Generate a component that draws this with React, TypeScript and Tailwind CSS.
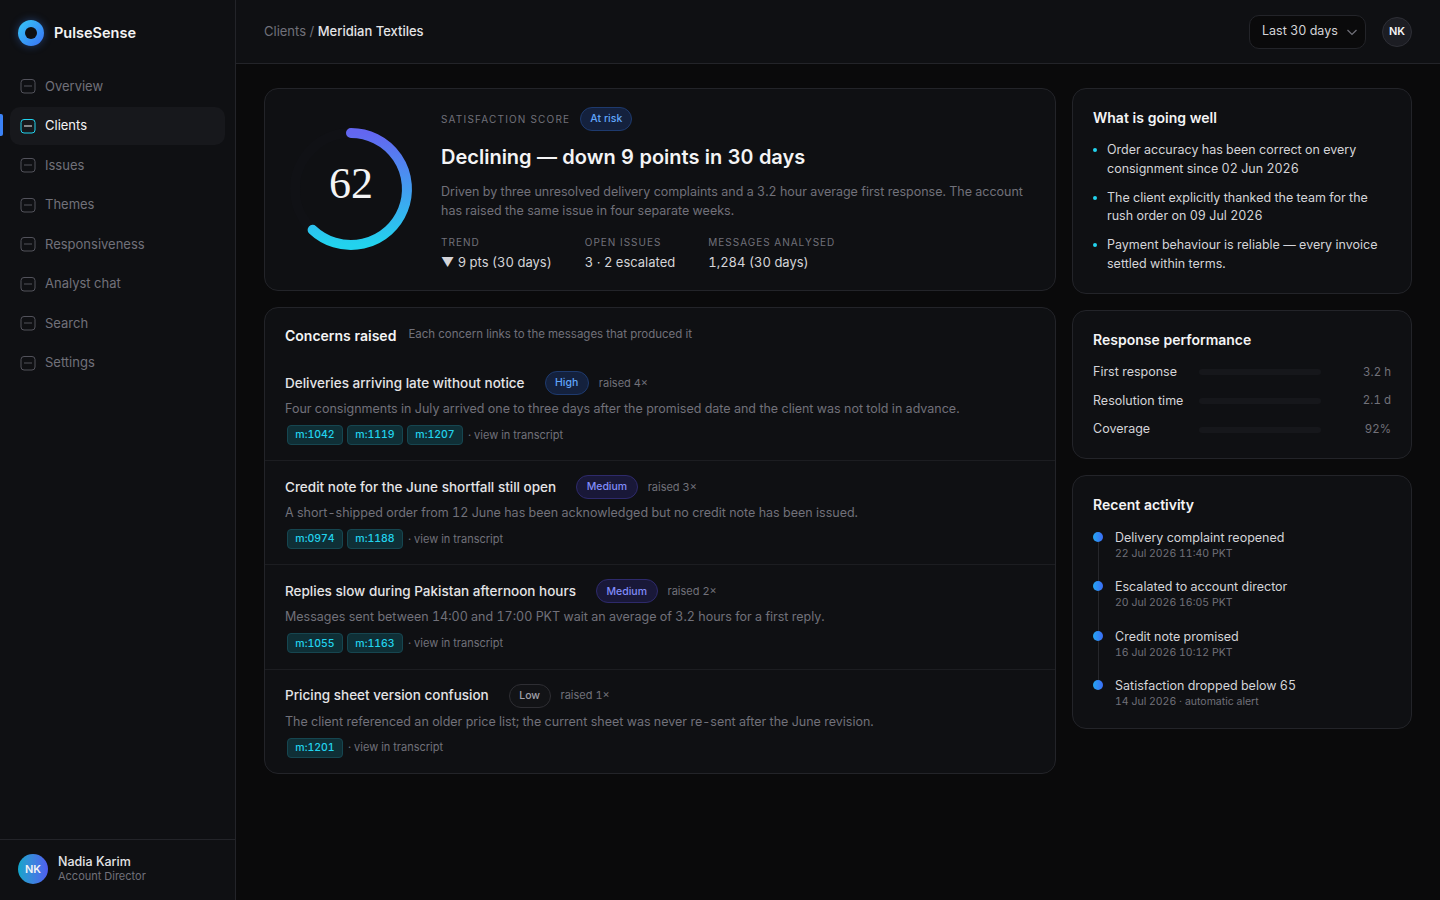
import React from "react";

const nav = ["Overview", "Clients", "Issues", "Themes", "Responsiveness", "Analyst chat", "Search", "Settings"];

function NavIcon({ active }: { active: boolean }) {
  return (
    <svg width="16" height="16" viewBox="0 0 16 16" fill="none" className="shrink-0" stroke={active ? "#22d3ee" : "#52525b"} strokeWidth="1">
      <rect x="1" y="1.5" width="14" height="13.5" rx="3" />
      <path d="M4 8h8" stroke={active ? "#f4f4f5" : "#52525b"} />
    </svg>
  );
}

function Stat({ label, value }: { label: string; value: string }) {
  return (
    <div>
      <div className="text-[10px] leading-[14px] tracking-[0.1em] text-[#71717a]">{label}</div>
      <div className="mt-[3px] text-[13px] leading-[20px] text-[#d4d4d8]">{value}</div>
    </div>
  );
}

const concerns = [
  { t: "Deliveries arriving late without notice", s: "High", c: "border-[#1e3a6e] bg-[#14213d] text-[#60a5fa]", r: "raised 4×", d: "Four consignments in July arrived one to three days after the promised date and the client was not told in advance.", m: ["m:1042", "m:1119", "m:1207"] },
  { t: "Credit note for the June shortfall still open", s: "Medium", c: "border-[#2e2a6b] bg-[#191838] text-[#818cf8]", r: "raised 3×", d: "A short-shipped order from 12 June has been acknowledged but no credit note has been issued.", m: ["m:0974", "m:1188"] },
  { t: "Replies slow during Pakistan afternoon hours", s: "Medium", c: "border-[#2e2a6b] bg-[#191838] text-[#818cf8]", r: "raised 2×", d: "Messages sent between 14:00 and 17:00 PKT wait an average of 3.2 hours for a first reply.", m: ["m:1055", "m:1163"] },
  { t: "Pricing sheet version confusion", s: "Low", c: "border-[#2e2e33] bg-[#121316] text-[#a1a1aa]", r: "raised 1×", d: "The client referenced an older price list; the current sheet was never re-sent after the June revision.", m: ["m:1201"] },
];

const well = [
  "Order accuracy has been correct on every consignment since 02 Jun 2026",
  "The client explicitly thanked the team for the rush order on 09 Jul 2026",
  "Payment behaviour is reliable — every invoice settled within terms.",
];

const perf = [["First response", "3.2 h"], ["Resolution time", "2.1 d"], ["Coverage", "92%"]];

const activity = [
  ["Delivery complaint reopened", "22 Jul 2026 11:40 PKT"],
  ["Escalated to account director", "20 Jul 2026 16:05 PKT"],
  ["Credit note promised", "16 Jul 2026 10:12 PKT"],
  ["Satisfaction dropped below 65", "14 Jul 2026 · automatic alert"],
];

const card = "rounded-[14px] border border-[#232429] bg-[#0f1013]";

export default function App() {
  return (
    <div className="flex h-[900px] w-[1440px] overflow-hidden bg-[#0a0a0b] font-['Inter',sans-serif] tabular-nums text-[#f4f4f5]">
      <aside className="flex w-[236px] shrink-0 flex-col border-r border-[#232429] bg-[#0f1013]">
        <div className="flex h-[64px] items-center gap-[10px] pl-[18px] pt-[2px]">
          <div className="h-[26px] w-[26px] rounded-full bg-gradient-to-br from-[#38c8f5] to-[#3b6ff6] p-[7px] shadow-[0_0_8px_rgba(59,130,246,0.4)]">
            <div className="h-full w-full rounded-full bg-[#0f1013]" />
          </div>
          <span className="text-[14.5px] font-semibold">PulseSense</span>
        </div>
        <nav className="flex flex-col gap-[2px] px-[10px] pt-[3.5px]">
          {nav.map((n) => {
            const active = n === "Clients";
            return (
              <div key={n} className={`relative flex h-[37.5px] items-center gap-[9px] rounded-[10px] pl-[10px] text-[13px] ${active ? "bg-[#17181c] text-[#f4f4f5]" : "text-[#71717a]"}`}>
                {active && <span className="absolute left-[-10px] top-[7px] h-[22px] w-[3px] rounded-r-[2px] bg-[#3b82f6]" />}
                <NavIcon active={active} />
                <span>{n}</span>
              </div>
            );
          })}
        </nav>
        <div className="mt-auto flex h-[61px] items-center gap-[10px] border-t border-[#232429] pb-[2px] pl-[18px]">
          <div className="flex h-[30px] w-[30px] items-center justify-center rounded-full bg-gradient-to-r from-[#0ea5c9] to-[#4f5cf0] text-[11px] font-semibold">NK</div>
          <div className="pb-[2px]">
            <div className="text-[12.5px] font-medium leading-[15px] text-[#e4e4e7]">Nadia Karim</div>
            <div className="text-[11px] leading-[14px] text-[#71717a]">Account Director</div>
          </div>
        </div>
      </aside>

      <div className="flex min-w-0 flex-1 flex-col">
        <header className="flex h-[64px] shrink-0 items-center justify-between border-b border-[#232429] bg-[#0f1013] pl-[28px] pr-[28px]">
          <div className="text-[13px] text-[#71717a]">
            Clients / <span className="font-medium text-[#e4e4e7]">Meridian Textiles</span>
          </div>
          <div className="flex items-center gap-[16px]">
            <div className="flex h-[34px] w-[117px] items-center gap-[8px] rounded-[10px] border border-[#232429] bg-[#0a0a0b] pl-[12px] text-[12.5px] text-[#d4d4d8]">
              Last 30 days
              <svg width="12" height="12" viewBox="0 0 12 12" fill="none" stroke="#71717a" strokeWidth="1.2"><path d="M1.5 4l4.5 4.5L10.5 4" /></svg>
            </div>
            <div className="flex h-[30px] w-[30px] items-center justify-center rounded-full border border-[#2e2f36] bg-[#1c1d23] text-[11px] font-semibold">NK</div>
          </div>
        </header>

        <main className="grid grid-cols-[792px_340px] items-start gap-[16px] px-[28px] pt-[24px]">
          <div className="flex flex-col gap-[16px]">
            <section className={`${card} flex h-[203px] items-center gap-[24px] px-[20px]`}>
              <svg width="132" height="132" viewBox="0 0 132 132" fill="none" className="shrink-0 -translate-y-px">
                <defs>
                  <linearGradient id="ring" x1="0" y1="0" x2="0" y2="1">
                    <stop offset="0" stopColor="#6366f1" />
                    <stop offset="1" stopColor="#22d3ee" />
                  </linearGradient>
                </defs>
                <circle cx="66" cy="66" r="56" stroke="#101115" strokeWidth="10" />
                <path d="M66 10 A56 56 0 1 1 27.6 106.8" stroke="url(#ring)" strokeWidth="10" strokeLinecap="round" />
                <text x="66" y="75" textAnchor="middle" fill="#f4f4f5" fontSize="44" fontFamily="'Liberation Serif',serif">62</text>
              </svg>
              <div className="min-w-0 flex-1">
                <div className="flex items-center gap-[10px]">
                  <span className="text-[10px] tracking-[0.12em] text-[#71717a]">SATISFACTION SCORE</span>
                  <span className="flex h-[24px] items-center rounded-full border border-[#1e3a6e] bg-[#14213d] px-[9px] text-[10.5px] font-medium text-[#60a5fa]">At risk</span>
                </div>
                <h1 className="mt-[12px] text-[20px] font-semibold leading-[28px]">Declining — down 9 points in 30 days</h1>
                <p className="mt-[11px] text-[12.5px] leading-[19px] text-[#71717a]">Driven by three unresolved delivery complaints and a 3.2 hour average first response. The account has raised the same issue in four separate weeks.</p>
                <div className="mt-[15px] flex gap-[33px]">
                  <Stat label="TREND" value="▼ 9 pts (30 days)" />
                  <Stat label="OPEN ISSUES" value="3 · 2 escalated" />
                  <Stat label="MESSAGES ANALYSED" value="1,284 (30 days)" />
                </div>
              </div>
            </section>

            <section className={`${card} h-[467px]`}>
              <div className="flex h-[48px] items-center gap-[12px] px-[20px] pt-[6px]">
                <h2 className="text-[14px] font-semibold">Concerns raised</h2>
                <span className="text-[11.5px] text-[#71717a]">Each concern links to the messages that produced it</span>
              </div>
              {concerns.map((c, i) => (
                <div key={c.t} className={`h-[104.2px] border-t px-[20px] pt-[14px] ${i ? "border-[#1c1d21]" : "border-transparent"}`}>
                  <div className="flex h-[24px] items-center">
                    <span className="text-[13.5px] font-medium text-[#e4e4e7]">{c.t}</span>
                    <span className={`ml-[20px] flex h-[24px] items-center rounded-full border px-[9.5px] text-[10.5px] font-medium ${c.c}`}>{c.s}</span>
                    <span className="ml-[10px] text-[11px] text-[#71717a]">{c.r}</span>
                  </div>
                  <p className="mt-[4px] text-[12.5px] leading-[19px] text-[#71717a]">{c.d}</p>
                  <div className="mt-[7px] flex items-center gap-[4px] pl-[2px]">
                    {c.m.map((m) => (
                      <span key={m} className="flex h-[20px] w-[56px] items-center justify-center rounded-[4px] border border-[#164650] bg-[#0f2f36] text-[10.5px] font-medium text-[#22d3ee]">{m}</span>
                    ))}
                    <span className="ml-[1px] text-[11px] text-[#71717a]">· view in transcript</span>
                  </div>
                </div>
              ))}
            </section>
          </div>

          <div className="flex flex-col gap-[16px]">
            <section className={`${card} h-[206px] px-[20px] pt-[19px]`}>
              <h2 className="text-[14px] font-semibold leading-[20px]">What is going well</h2>
              <ul className="mt-[13px] flex flex-col gap-[10px]">
                {well.map((w) => (
                  <li key={w} className="relative pl-[14px] text-[12.5px] leading-[18.75px] text-[#d4d4d8]">
                    <span className="absolute left-0 top-[7px] h-[4px] w-[4px] rounded-full bg-[#22d3ee]" />
                    {w}
                  </li>
                ))}
              </ul>
            </section>

            <section className={`${card} h-[149px] px-[20px] pt-[19px]`}>
              <h2 className="text-[14px] font-semibold leading-[20px]">Response performance</h2>
              <div className="mt-[8px] flex flex-col">
                {perf.map(([a, b]) => (
                  <div key={a} className="flex h-[28.7px] items-center">
                    <span className="w-[106px] text-[12.5px] text-[#d4d4d8]">{a}</span>
                    <span className="h-[6px] w-[122px] rounded-full bg-[#16171b]" />
                    <span className="flex-1 text-right text-[11.5px] text-[#71717a]">{b}</span>
                  </div>
                ))}
              </div>
            </section>

            <section className={`${card} h-[254px] px-[20px] pt-[19px]`}>
              <h2 className="text-[14px] font-semibold leading-[20px]">Recent activity</h2>
              <div className="mt-[14px] flex flex-col">
                {activity.map(([a, b], i) => (
                  <div key={a} className="relative h-[49.3px] pl-[22px]">
                    <span className="absolute left-0 top-[3px] h-[10px] w-[10px] rounded-full bg-gradient-to-r from-[#22a5f0] to-[#3b6cf6]" />
                    {i < 3 && <span className="absolute bottom-[-3px] left-[4.5px] top-[13px] w-px bg-[#26272c]" />}
                    <div className="text-[12.5px] leading-[17px] text-[#d4d4d8]">{a}</div>
                    <div className="text-[10.5px] leading-[16px] text-[#71717a]">{b}</div>
                  </div>
                ))}
              </div>
            </section>
          </div>
        </main>
      </div>
    </div>
  );
}
